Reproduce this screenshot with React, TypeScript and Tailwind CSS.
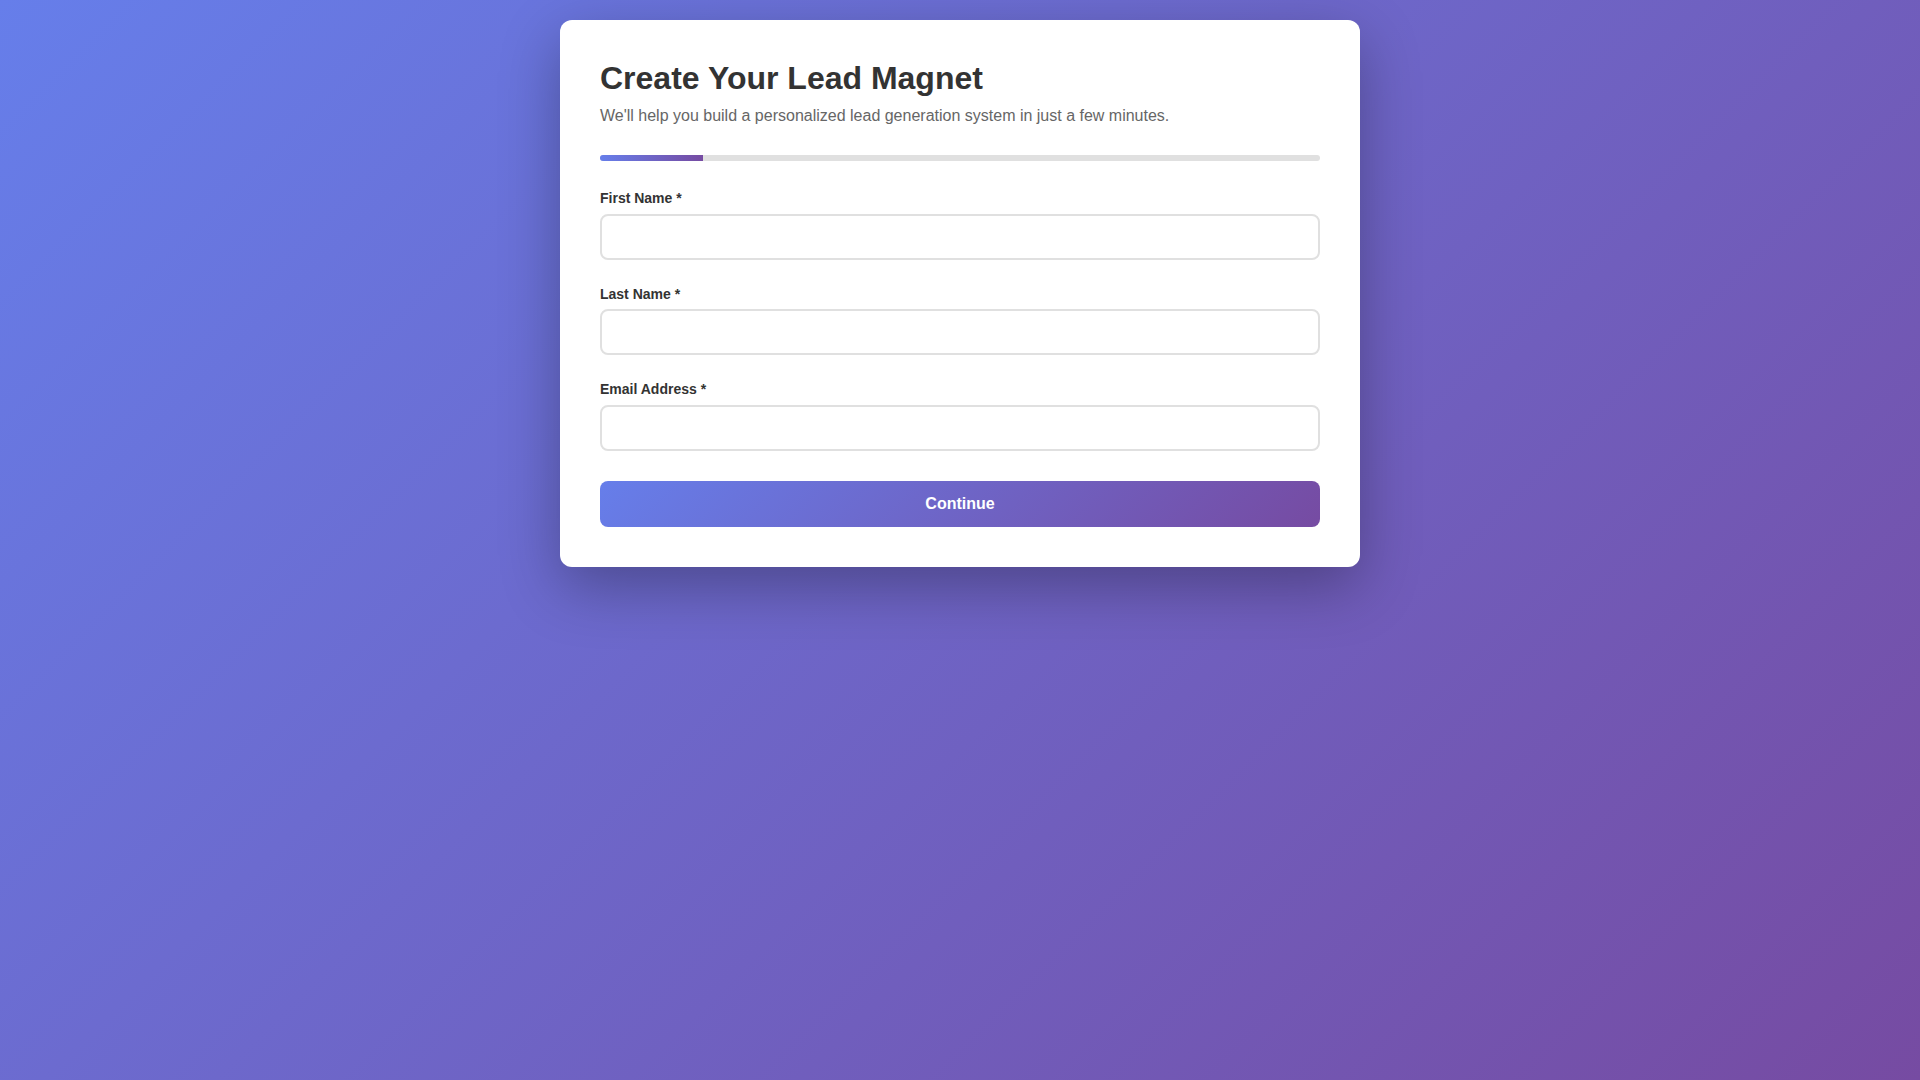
import React from "react";

const fields = [
  { id: "firstName", label: "First Name *", type: "text" },
  { id: "lastName", label: "Last Name *", type: "text" },
  { id: "email", label: "Email Address *", type: "email" },
];

export default function App() {
  const step = 1;
  const totalSteps = 7;

  return (
    <main className="min-h-screen w-full bg-[linear-gradient(135deg,#667eea_0%,#764ba2_100%)] font-['Liberation_Sans',Arial,sans-serif] leading-normal">
      <div className="mx-auto w-[800px] pt-5">
        <section className="rounded-xl bg-white p-10 shadow-[0_20px_60px_rgba(0,0,0,0.3)]">
          <h1 className="mb-[9px] text-[32px] font-bold leading-[1.16] text-[#333]">Create Your Lead Magnet</h1>
          <p className="text-base leading-[1.2] text-[#666]">
            We'll help you build a personalized lead generation system in just a few minutes.
          </p>

          <div className="mt-[30px] mb-[28px] h-[6px] w-full overflow-hidden rounded-full bg-[#e0e0e0]">
            <div
              className="h-full bg-[linear-gradient(90deg,#667eea,#764ba2)]"
              style={{ width: `${(step / totalSteps) * 100}%` }}
            />
          </div>

          <form onSubmit={(e) => e.preventDefault()}>
            {fields.map((f) => (
              <div key={f.id} className="mb-[25px] last:mb-0">
                <label htmlFor={f.id} className="mb-[5px] block text-sm font-bold leading-[1.4] text-[#333]">
                  {f.label}
                </label>
                <input
                  id={f.id}
                  type={f.type}
                  className="block h-[46px] w-full rounded-lg border-2 border-[#e0e0e0] px-3 py-3 text-base text-[#333] outline-none"
                />
              </div>
            ))}

            <button
              type="submit"
              className="mt-[30px] block h-[46px] w-full rounded-lg bg-[linear-gradient(135deg,#667eea_0%,#764ba2_100%)] text-base font-bold text-white"
            >
              Continue
            </button>
          </form>
        </section>
      </div>
    </main>
  );
}
